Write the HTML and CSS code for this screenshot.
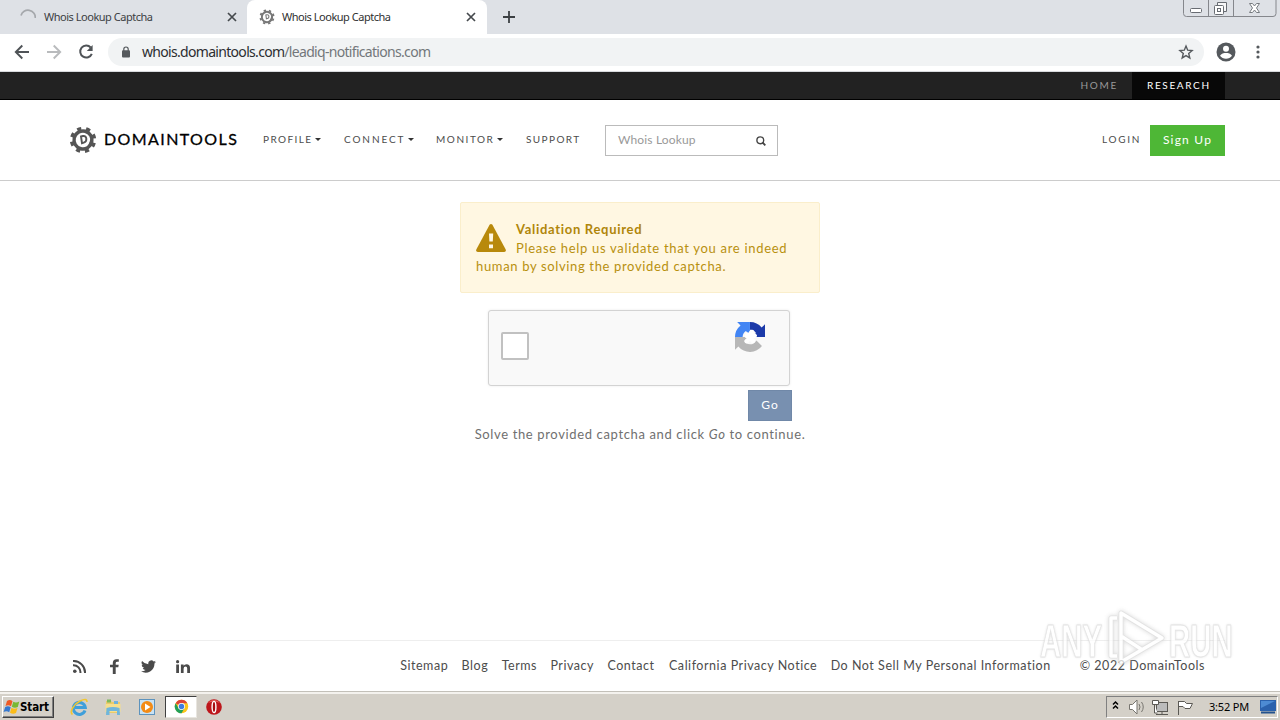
FILE: index.html
```html
<!DOCTYPE html>
<html lang="en">
<head>
<meta charset="utf-8">
<title>Whois Lookup Captcha</title>
<link rel="stylesheet" href="styles.css">
</head>
<body>
<svg class="defs" width="0" height="0">
  <symbol id="gear" viewBox="0 0 28 28">
    <g transform="rotate(14 14 14)">
      <circle cx="14" cy="14" r="9" fill="none" stroke="currentColor" stroke-width="3.400"/>
      <circle cx="14" cy="14" r="11.600" fill="none" stroke="currentColor" stroke-width="3.200" stroke-dasharray="4.200 4.911"/>
      <path d="M20.500 6.500A9.500 9.500 0 0 1 19 22.500q3-8 1.500-16z" fill="currentColor"/>
    </g>
    <path d="M12 10.500l2-.5c4-.8 4.600 5.600.8 6.700l-1.800.5z" fill="none" stroke="currentColor" stroke-width="1.900"/>
  </symbol>
  <symbol id="close" viewBox="0 0 10 10"><path d="M1 1l8 8M9 1L1 9" stroke="#45494d" stroke-width="1.700"/></symbol>
</svg>

<div class="tabstrip">
  <div class="tab tab-idle">
    <svg class="tab-icon" viewBox="0 0 16 16"><path d="M1 6.500A7.300 7.300 0 0 1 15.300 9" fill="none" stroke="#a5a8ac" stroke-width="1.700"/></svg>
    <span class="tab-title">Whois Lookup Captcha</span>
    <svg class="tab-close"><use href="#close"/></svg>
  </div>
  <div class="tab tab-active">
    <svg class="tab-icon tab-gear"><use href="#gear"/></svg>
    <span class="tab-title">Whois Lookup Captcha</span>
    <svg class="tab-close"><use href="#close"/></svg>
  </div>
  <svg class="new-tab" viewBox="0 0 12 12"><path d="M6 0v12M0 6h12" stroke="#3c4043" stroke-width="1.800"/></svg>
  <svg class="window-buttons" width="94" height="18" viewBox="0 0 94 18" fill="none">
    <path d="M.5 0v13.500q0 3 3 3h86.500q3 0 3-3V0M25.500 0v16.500M50.500 0v16.500" stroke="#85878c"/>
    <rect x="7.500" y="8.500" width="11" height="4" rx="1" fill="#fff" stroke="#686c72"/>
    <path d="M34.500 5.500v-3h9v9h-3" fill="#f7f7f8" stroke="#686c72"/>
    <rect x="31.500" y="5.500" width="9" height="9" rx="1" fill="#fff" stroke="#686c72"/><rect x="34.500" y="8.500" width="3" height="3" stroke="#686c72"/>
    <path d="M66.500 3.500h3l2 2.500 2-2.500h3l-3 4.500 3 4.500h-3l-2-2.500-2 2.500h-3l3-4.500z" fill="#fff" stroke="#777b80"/>
  </svg>
</div>

<div class="toolbar">
  <svg class="nav-icon" viewBox="0 0 16 16"><path d="M15 8H2M8.300 1.500L1.800 8l6.500 6.500" fill="none" stroke="#4f5357" stroke-width="1.900"/></svg>
  <svg class="nav-icon nav-forward" viewBox="0 0 16 16"><path d="M1 8h13M7.700 1.500L14.200 8l-6.500 6.500" fill="none" stroke="#b9bbbd" stroke-width="1.900"/></svg>
  <svg class="nav-icon nav-reload" viewBox="0 0 16 16"><path d="M12.700 3.500A6 6 0 1 0 13.800 9.800" fill="none" stroke="#4f5357" stroke-width="2"/><path d="M14.600 1v6H8.800z" fill="#4f5357"/></svg>
  <div class="omnibox">
    <svg class="lock" viewBox="0 0 8 12"><path d="M1.800 5V3.200a2.200 2.200 0 0 1 4.400 0V5" fill="none" stroke="#55595d" stroke-width="1.200"/><rect y="4.300" width="8" height="7.300" rx="1" fill="#55595d"/></svg>
    <span class="url"><span class="url-host">whois.domaintools.com</span><span class="url-path">/leadiq-notifications.com</span></span>
    <svg class="star" viewBox="0 0 16 16"><path d="M8 2l1.700 4.200 4.400.4-3.400 2.900 1.100 4.400L8 11.600l-3.800 2.300 1.100-4.400-3.400-2.900 4.400-.4z" fill="none" stroke="#55595d" stroke-width="1.400"/></svg>
  </div>
  <svg class="avatar" viewBox="0 0 20 20"><circle cx="10" cy="10" r="9.500" fill="#55595d"/><circle cx="10" cy="6.800" r="3" fill="#fff"/><path d="M4 13.800c1-2.300 4-2.800 6-2.800s5 .5 6 2.800c-1.500 2-3.500 3-6 3s-4.500-1-6-3z" fill="#fff"/></svg>
  <svg class="kebab" viewBox="0 0 4 14"><g fill="#55595d"><circle cx="2" cy="2" r="1.600"/><circle cx="2" cy="7" r="1.600"/><circle cx="2" cy="12" r="1.600"/></g></svg>
</div>

<div class="topbar">
  <a class="top-link">HOME</a>
  <a class="top-link top-current">RESEARCH</a>
</div>

<header class="header">
  <svg class="logo-gear"><use href="#gear"/></svg>
  <span class="logo-text">DOMAINTOOLS</span>
  <nav class="menu">
    <a class="menu-item profile">PROFILE<i class="caret"></i></a>
    <a class="menu-item connect">CONNECT<i class="caret"></i></a>
    <a class="menu-item monitor">MONITOR<i class="caret"></i></a>
    <a class="menu-item">SUPPORT</a>
  </nav>
  <div class="search">
    <span class="placeholder">Whois Lookup</span>
    <svg class="search-icon" viewBox="0 0 10 10"><circle cx="4.300" cy="4.300" r="3.400" fill="none" stroke="#444" stroke-width="1.400"/><path d="M6.500 6.500L9.300 9.300" stroke="#444" stroke-width="1.800"/></svg>
  </div>
  <a class="login">LOGIN</a>
  <a class="signup">Sign Up</a>
</header>

<main class="main">
  <section class="alert">
    <svg class="warning" viewBox="0 0 30 28"><path d="M13.600.8q1.400-1.600 2.800 0L29.700 25.600q.7 2.400-1.500 2.400H1.800Q-.4 28 .3 25.600z" fill="#b8890b"/><path d="M13 9.500h4.200l-.4 8h-3.400zM13 20.500h4v3.800h-4z" fill="#fff8e5"/></svg>
    <strong class="alert-title">Validation Required</strong><br>
    <span class="line-one">Please help us validate that you are indeed</span><br>
    <span class="line-two">human by solving the provided captcha.</span>
  </section>
  <section class="captcha">
    <div class="checkbox"></div>
    <svg class="recaptcha" viewBox="0 0 64 64">
      <path fill="#1c3aa9" d="M64 32V4.600l-7.200 7.200A32 32 0 0 0 31.900 0v16.300h1.200c4.900.4 9.200 3.100 11.700 7L36.500 32z"/>
      <path fill="#4285f4" d="M31.900 0H4.600l7.200 7.200A32 32 0 0 0 0 32h16.300v-1.100c.4-4.900 3.100-9.200 7-11.700l8.600 8.300z"/>
      <path fill="#b7b7b7" d="M0 32v27.400l7.200-7.200A32 32 0 0 0 57.500 51.300L45.700 39.500C42 45.500 38 47.700 32 47.700c-6 0-10-2.800-12.800-7L27.500 32z"/>
      <path fill="#fff" d="M29 23c2-7 9-8 12-4 1 3-1 6-4 8 4-3 9-2 10 2 0 4-4 6-8 5 5 3 5 9 1 11-4 1-7-2-8-6-2 6-7 8-11 5-2-4 1-8 5-9-5-1-7-5-4-9 2-3 5-4 7-3z"/>
    </svg>
  </section>
  <button class="go">Go</button>
  <p class="hint">Solve the provided captcha and click <em>Go</em> to continue.</p>
</main>

<footer class="footer">
  <svg class="social rss" viewBox="0 0 13 13"><g fill="none" stroke="#4a4a4a" stroke-width="2"><path d="M0 5.200A7 7 0 0 1 7.400 13M0 1A11.500 11.500 0 0 1 12 13"/></g><circle cx="1.800" cy="11.200" r="1.800" fill="#4a4a4a"/></svg>
  <svg class="social facebook" viewBox="0 0 9 15"><path d="M2.800 15V8.300H0V5.800h2.800V4Q2.800.2 6.500.2H8.800v2.500H7.200Q5.700 2.700 5.700 4v1.800h3l-.4 2.500H5.700V15z" fill="#4a4a4a"/></svg>
  <svg class="social twitter" viewBox="0 0 24 20"><path fill="#4a4a4a" d="M24 2.600a10 10 0 0 1-2.800.8A5 5 0 0 0 23.300.7a10 10 0 0 1-3.100 1.200 4.900 4.900 0 0 0-8.400 4.500A14 14 0 0 1 1.700 1.200a4.900 4.900 0 0 0 1.500 6.600A5 5 0 0 1 1 7.200a4.900 4.900 0 0 0 4 4.900 5 5 0 0 1-2.300.1 4.900 4.900 0 0 0 4.600 3.400A10 10 0 0 1 0 17.600a14 14 0 0 0 21.500-12.500A10 10 0 0 0 24 2.600z"/></svg>
  <svg class="social linkedin" viewBox="0 0 14 13"><path fill="#4a4a4a" d="M.2 4.500H3V13H.2zM4.900 4.500h2.700v1.300Q8.400 4.300 10.500 4.300 14 4.300 14 8v5h-2.800V8.500q0-1.900-1.600-1.900-2 0-2 2.200V13H4.900z"/><circle cx="1.600" cy="1.700" r="1.600" fill="#4a4a4a"/></svg>
  <nav class="links">
    <a>Sitemap</a><a>Blog</a><a>Terms</a><a>Privacy</a><a class="contact">Contact</a><a>California Privacy Notice</a><a>Do Not Sell My Personal Information</a>
  </nav>
  <span class="copyright">© 2022 DomainTools</span>
</footer>

<div class="watermark">
  <span class="mark-text">ANY</span>
  <svg class="mark-play" viewBox="0 0 58 64"><path d="M9 47H3V9h6M13 4l41 25-41 24zM13 27l20 13" fill="none" stroke="#d9d9d9" stroke-width="5" stroke-linejoin="round"/><path d="M9 47H3V9h6M13 4l41 25-41 24zM13 27l20 13" fill="none" stroke="#fff" stroke-width="3.400" stroke-linejoin="round"/></svg>
  <span class="mark-text">RUN</span>
</div>

<div class="taskbar">
  <div class="start">
    <svg class="flag" viewBox="0 0 17 16"><path d="M4 2q3-2 5.500.2L8 7.300Q5.500 5.300 2.500 7z" fill="#ef5a24"/><path d="M10.300 2.800q2.700 1.700 6-.3L14.800 8q-3 1.600-6-.2z" fill="#79b833"/><path d="M2.200 8q3-1.600 5.500.3l-1.500 5Q3.800 11.200.6 12.900z" fill="#3678cf"/><path d="M8.500 8.800q2.700 1.700 6 .2l-1.500 5q-3 1.700-6-.3z" fill="#fbbc18"/></svg>
    <span>Start</span>
  </div>
  <svg class="task-icon ie" viewBox="0 0 18 18"><path d="M15 12.500A6 6 0 1 1 15.300 9.500H5" fill="none" stroke="#3f9fda" stroke-width="3"/><path d="M2.500 16.500C-1 14 4 6 10 3q7-3.500 7 1" fill="none" stroke="#f2c62f" stroke-width="1.600"/></svg>
  <svg class="task-icon explorer" viewBox="0 0 18 18"><path d="M2 3h5l1 1h8v11H2z" fill="#e9cb6a"/><path d="M3 1.500h4v3H3z" fill="#7db95c"/><path d="M10 3h4v3h-4z" fill="#6db2dd"/><path d="M1.500 6h15v8h-15z" fill="#f5df8e"/><path d="M2 17l.5-7q6.500-2 13 0l.5 7H13v-4H5.500v4z" fill="#6fb6dc"/></svg>
  <svg class="task-icon player" viewBox="0 0 18 18"><rect x="1.500" y="1.500" width="15" height="15" fill="#c8e2f4" stroke="#5d93bd"/><circle cx="9" cy="9" r="6" fill="#f38b16"/><path d="M7 5.500l5.500 3.500L7 12.500z" fill="#fff"/></svg>
  <div class="chrome-button">
    <svg class="chrome" viewBox="0 0 16 16"><circle cx="8" cy="8" r="7.200" fill="#fbc51b"/><path d="M8 8L1.760 4.400A7.200 7.200 0 0 1 14.240 4.400H8z" fill="#dd4437"/><path d="M1.760 4.400A7.200 7.200 0 0 0 8 15.200L11 10 5 10z" fill="#22a05a"/><circle cx="8" cy="8" r="3.700" fill="#fff"/><circle cx="8" cy="8" r="2.900" fill="#3f7de0"/></svg>
  </div>
  <svg class="task-icon opera" viewBox="0 0 18 18"><circle cx="9" cy="9" r="7.800" fill="#bd161b"/><path d="M3 5a7.500 7.500 0 0 1 12 0q-6-3-12 0z" fill="#e45b57"/><ellipse cx="9" cy="9" rx="1.900" ry="5.600" fill="#a80c10" stroke="#fff" stroke-width="1.400"/></svg>
  <div class="tray">
    <svg class="tray-icons" width="96" height="20" viewBox="0 0 96 20" fill="none">
      <path d="M6 7.500l2.500-2.500L11 7.500M6 11.500L8.500 9l2.500 2.500" stroke="#000" stroke-width="1.500"/>
      <path d="M22.500 7.500h3l4.500-4.500v14l-4.500-4.500h-3z" fill="#fff" stroke="#77756f"/><path d="M32 7q2 3 0 6M34.500 5q3.500 5 0 10" stroke="#77756f"/>
      <rect x="49.500" y="5.500" width="11" height="9" fill="#bbb" stroke="#5b5954"/><path d="M49 17.500h12M55 15v2M47.500 7v9h3M45.500 3.500h6v4h-6z" fill="#fff" stroke="#5b5954"/>
      <path d="M71.500 4v14M71.500 4.500h6l2 2h6l-2.500 5h-5l-2-2h-4.500" fill="#fff" stroke="#5b5954"/>
    </svg>
    <span class="clock">3:52 PM</span>
    <svg class="desktop" viewBox="0 0 16 14"><rect width="16" height="11" fill="#2b62ad"/><path d="M1 1h14L1 8z" fill="#4d8bd3"/><path d="M1 12.500h14" stroke="#24528d" stroke-width="2"/></svg>
  </div>
</div>
</body>
</html>
```
FILE: styles.css
```css
* { box-sizing: border-box; }
body { margin: 0; width: 1280px; height: 720px; overflow: hidden; display: flex; flex-direction: column; background: #fff; font: 12px/18px Lato, sans-serif; color: #4c4c4c; }
svg { display: block; flex: none; }
.defs { position: absolute; }
a, span { white-space: nowrap; }

.tabstrip { height: 34px; flex: none; display: flex; background: #dee1e6; }
.tab { display: flex; align-items: center; height: 34px; font: 11px/16px "Noto Sans", sans-serif; letter-spacing: -0.48px; color: #3c4043; }
.tab-idle { width: 247px; padding: 0 10px 0 20px; border-radius: 0 0 8px 0; }
.tab-active { width: 240px; padding: 0 11px 0 12px; background: #fff; border-radius: 8px 8px 0 0; color: #303030; }
.tab-icon { width: 16px; height: 16px; margin-right: 8px; }
.tab-gear { color: #777; }
.tab-active .tab-title { margin-left: -1px; }
.tab-close { width: 10px; height: 10px; margin-left: auto; }
.new-tab { width: 12px; height: 12px; margin: 11px 0 0 16px; }
.window-buttons { margin-left: auto; margin-right: 3px; }

.toolbar { height: 38px; flex: none; display: flex; align-items: center; padding: 0 20px 1px 14px; border-bottom: 1px solid #d8dadd; }
.nav-icon { width: 16px; height: 16px; }
.nav-forward, .nav-reload { margin-left: 16px; }
.omnibox { width: 1096px; height: 28px; display: flex; align-items: center; margin-left: 14px; padding: 0 10px 0 14px; border-radius: 14px; background: #f1f3f4; }
.lock { width: 8px; height: 12px; }
.url { margin-left: 12px; font: 14px/20px "Noto Sans", sans-serif; letter-spacing: -0.69px; color: #73777b; }
.url-host { color: #2c2d30; }
.star { width: 16px; height: 16px; margin-left: auto; }
.avatar { width: 20px; height: 20px; margin-left: 12px; }
.kebab { width: 4px; height: 14px; margin-left: auto; }

.topbar { height: 28px; flex: none; display: flex; justify-content: flex-end; padding-right: 55px; background: #222; border-bottom: 1px solid #000; }
.top-link { padding: 0 14px 0 15px; font-size: 10px; line-height: 27px; letter-spacing: 1.7px; color: #999; }
.top-current { width: 93px; background: #080808; color: #fff; letter-spacing: 1.650px; }

.header { height: 81px; flex: none; display: flex; align-items: center; padding: 0 55px 1px 69px; border-bottom: 1px solid #ccc; }
.logo-gear { width: 28px; height: 28px; color: #555; }
.logo-text { width: 159px; margin: -1px 0 0 7px; font-size: 16px; letter-spacing: 1.400px; color: #000; -webkit-text-stroke: 0.3px #000; }
.menu { display: flex; width: 342px; margin-top: -1px; font-size: 10px; letter-spacing: 1.400px; }
.menu-item { display: flex; align-items: center; }
.profile { width: 81px; }
.connect { width: 92px; letter-spacing: 1.900px; }
.monitor { width: 90px; letter-spacing: 1.550px; }
.caret { margin-left: 3px; border: 3.5px solid transparent; border-top-color: #333; border-bottom: 0; }
.search { width: 173px; height: 31px; display: flex; align-items: center; justify-content: space-between; margin-top: 1px; padding: 0 11px 0 12px; border: 1px solid #bbb; }
.placeholder { font-size: 12px; letter-spacing: 0.15px; color: #999; }
.search-icon { width: 10px; height: 10px; margin-top: 2px; }
.login { margin: -1px 0 0 auto; font-size: 10px; letter-spacing: 1.700px; }
.signup { width: 75px; height: 31px; margin: 1px 0 0 9px; line-height: 30px; text-align: center; letter-spacing: 1.200px; background: #4eb736; color: #fff; }

.main { height: 459px; flex: none; display: flex; flex-direction: column; align-items: center; padding-top: 21px; }
.alert { width: 360px; height: 91px; padding: 17px 15px; border: 1px solid #faeecb; border-radius: 2px; background: #fff7e2; color: #b8900f; font-size: 13px; line-height: 18.500px; letter-spacing: 0.690px; }
.warning { float: left; width: 30px; height: 28px; margin: 4px 10px 0 0; }
.alert-title { letter-spacing: 0.700px; color: #b0860a; }
.line-two { letter-spacing: 0.650px; }
.captcha { width: 302px; height: 76px; display: flex; justify-content: space-between; margin: 17px 0 0 -2px; padding: 11px 24px 0 12px; border: 1px solid #d3d3d3; border-radius: 3px; background: #f9f9f9; box-shadow: 0 0 3px rgba(0, 0, 0, 0.08); }
.checkbox { width: 28px; height: 28px; margin-top: 10px; border: 2px solid #c1c1c1; border-radius: 2px; background: #fff; }
.recaptcha { width: 30px; height: 30px; }
.go { width: 44px; height: 31px; margin: 4px 0 0 260px; padding: 0 0 2px; border: 1px solid #7088a8; background: #7890b0; color: #fff; font: 12px Lato, sans-serif; letter-spacing: 1px; }
.hint { margin: 4px 0 0; font-size: 13px; letter-spacing: 0.640px; color: #707070; white-space: nowrap; }

.footer { height: 51px; flex: none; display: flex; align-items: center; margin: 0 55px 0 70px; padding: 0 20px 0 3px; border-top: 1px solid #eee; font-size: 12.5px; letter-spacing: 0.540px; }
.rss { width: 13px; height: 13px; }
.facebook { width: 9px; height: 15px; margin-left: 24px; }
.twitter { width: 15px; height: 13px; margin-left: 22px; }
.linkedin { width: 14px; height: 13px; margin-left: 20px; }
.links { display: flex; gap: 13.4px; margin-left: auto; margin-right: 29px; }
.contact { margin-right: 1px; }

.watermark { position: absolute; left: 1040px; top: 608px; display: flex; align-items: center; height: 66px; opacity: 0.75; }
.mark-text { font: 700 46px/34px "Liberation Sans", sans-serif; color: #fff; -webkit-text-stroke: 1px #ddd; transform: scaleX(0.64); transform-origin: left; width: 66px; text-shadow: 0 0 3px #bbb; }
.mark-play { width: 58px; height: 64px; margin-left: 2px; margin-right: 3px; filter: drop-shadow(0 0 2px #ccc); }

.taskbar { position: relative; height: 29px; flex: none; display: flex; align-items: center; padding: 1px 2px 0; background: #d4d0c8; border-top: 1px solid #c3c0b9; box-shadow: inset 0 2px #f4f2ee; }
.start { width: 52px; height: 22px; display: flex; align-items: center; border: 1px solid; border-color: #fff #404040 #404040 #fff; box-shadow: inset -1px -1px #808080; font: 700 11.5px/18px "DejaVu Sans Condensed", "DejaVu Sans", sans-serif; letter-spacing: -0.1px; color: #000; }
.flag { width: 17px; height: 16px; }
.task-icon { width: 18px; height: 18px; }
.ie { margin-left: 16px; }
.explorer { margin-left: 16px; }
.player { margin-left: 16px; }
.chrome-button { width: 32px; height: 22px; display: flex; align-items: center; justify-content: center; margin-left: 9px; background: #fff; border: 1px solid; border-color: #404040 #e8e5df #e8e5df #404040; }
.chrome { width: 15px; height: 15px; }
.opera { margin-left: 8px; }
.tray { width: 172px; height: 22px; display: flex; align-items: center; margin-left: auto; border: 1px solid; border-color: #808080 #fff #fff #808080; }
.clock { width: 51px; margin-left: 6px; font: 11px/16px "Noto Sans", sans-serif; letter-spacing: -0.200px; color: #000; }
.desktop { width: 16px; height: 14px; }
```
